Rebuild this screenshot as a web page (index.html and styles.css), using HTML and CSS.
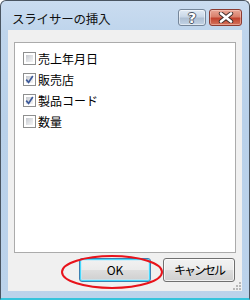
FILE: index.html
```html
<!DOCTYPE html>
<html lang="ja">
<head>
<meta charset="utf-8">
<link rel="stylesheet" href="styles.css">
</head>
<body>
<div class="window">
  <div class="titlebar">
    <span class="title">スライサーの挿入</span>
    <div class="caption-btns">
      <div class="cap help"><span class="q">?</span></div>
      <div class="cap close">
        <svg width="16" height="11" viewBox="0 0 16 11">
          <path d="M3 1.5 L13 9.5 M13 1.5 L3 9.5" stroke="#3a2a28" stroke-width="4.4" stroke-linecap="round" fill="none"/>
          <path d="M3 1.5 L13 9.5 M13 1.5 L3 9.5" stroke="#ffffff" stroke-width="2.6" stroke-linecap="round" fill="none"/>
        </svg>
      </div>
    </div>
  </div>
  <div class="client">
    <div class="listbox">
      <div class="item"><span class="chk"></span><span class="lbl">売上年月日</span></div>
      <div class="item"><span class="chk on"><svg width="9" height="9" viewBox="0 0 9 9"><path d="M1.2 4.6 L3.6 7.4 L7.8 1" stroke="#3d5a9a" stroke-width="1.7" fill="none"/></svg></span><span class="lbl">販売店</span></div>
      <div class="item"><span class="chk on"><svg width="9" height="9" viewBox="0 0 9 9"><path d="M1.2 4.6 L3.6 7.4 L7.8 1" stroke="#3d5a9a" stroke-width="1.7" fill="none"/></svg></span><span class="lbl">製品コード</span></div>
      <div class="item"><span class="chk"></span><span class="lbl">数量</span></div>
    </div>
    <div class="buttons">
      <div class="btn default">OK</div>
      <div class="btn"><span class="kana">キャンセル</span></div>
    </div>
    <svg class="grip" width="8" height="8" viewBox="0 0 8 8">
      <rect x="6" y="0" width="2" height="2" fill="#b8b8b8"/>
      <rect x="3" y="3" width="2" height="2" fill="#b8b8b8"/>
      <rect x="6" y="3" width="2" height="2" fill="#b8b8b8"/>
      <rect x="0" y="6" width="2" height="2" fill="#b8b8b8"/>
      <rect x="3" y="6" width="2" height="2" fill="#b8b8b8"/>
      <rect x="6" y="6" width="2" height="2" fill="#b8b8b8"/>
    </svg>
  </div>
  <svg class="annot" width="250" height="300" viewBox="0 0 250 300">
    <ellipse cx="112" cy="272" rx="50" ry="16" fill="none" stroke="#e8131b" stroke-width="2"/>
  </svg>
</div>
</body>
</html>
```

FILE: styles.css
```css
html, body {
  margin: 0;
  padding: 0;
  background: #ffffff;
}
body {
  width: 250px;
  height: 300px;
  overflow: hidden;
  font-family: "Noto Sans CJK JP", "Noto Sans", sans-serif;
}
.window {
  position: relative;
  box-sizing: border-box;
  width: 250px;
  height: 300px;
  border: 1px solid #4a5561;
  border-bottom: 2px solid #36c4dc;
  border-radius: 6px 6px 0 0;
  background: linear-gradient(to bottom, #cadcf0 0px, #bfd5ec 30px, #b9d1ea 120px, #bcd3eb 300px);
  padding: 0 7px 7px 7px;
  display: flex;
  flex-direction: column;
}
.titlebar {
  height: 29px;
  display: flex;
  align-items: flex-start;
  justify-content: space-between;
}
.title {
  font-size: 12.5px;
  line-height: 16px;
  margin-top: 10px;
  margin-left: 4px;
  color: #111;
  letter-spacing: -0.2px;
}
.caption-btns {
  display: flex;
  gap: 3px;
  margin-top: 8px;
}
.cap {
  box-sizing: border-box;
  height: 17px;
  border-radius: 3px;
  display: flex;
  align-items: center;
  justify-content: center;
}
.help {
  width: 28px;
  border: 1px solid #75869a;
  background: linear-gradient(to bottom, #e2ebf5 0%, #c9d7e7 45%, #aebfd3 55%, #c2d3e5 100%);
  box-shadow: inset 0 0 0 1px rgba(255,255,255,0.5);
}
.q {
  font-family: "DejaVu Sans", sans-serif;
  font-weight: bold;
  font-size: 14px;
  line-height: 14px;
  color: #ffffff;
  text-shadow: 1px 0 0 #4b5563, -1px 0 0 #4b5563, 0 1px 0 #4b5563, 0 -1px 0 #4b5563;
}
.close {
  width: 33px;
  border: 1px solid #8b3b32;
  background: linear-gradient(to bottom, #e9a797 0%, #d9806c 45%, #c2422e 55%, #d3735c 100%);
  box-shadow: inset 0 0 0 1px rgba(255,220,210,0.45);
}
.client {
  position: relative;
  flex: 1;
  background: #f0f0f0;
  padding: 12px 6px 8px 6px;
  display: flex;
  flex-direction: column;
}
.listbox {
  box-sizing: border-box;
  height: 211px;
  background: #ffffff;
  border: 1px solid #ababab;
  padding: 9px 0 0 8px;
  display: flex;
  flex-direction: column;
  gap: 8px;
}
.item {
  display: flex;
  align-items: center;
  height: 13px;
}
.chk {
  box-sizing: border-box;
  width: 13px;
  height: 13px;
  border: 1px solid #8e8f8f;
  background: #ffffff;
  display: flex;
  align-items: center;
  justify-content: center;
  position: relative;
}
.chk::before {
  content: "";
  position: absolute;
  left: 2px; top: 2px; right: 2px; bottom: 2px;
  background: linear-gradient(135deg, #c6c9ce 0%, #e3e5e8 60%, #f4f4f4 100%);
}
.chk svg {
  position: relative;
}
.lbl {
  margin-left: 2px;
  font-size: 12px;
  line-height: 14px;
  color: #000;
}
.buttons {
  display: flex;
  justify-content: flex-end;
  gap: 12px;
  margin-top: 5px;
  padding-right: 1px;
}
.btn {
  box-sizing: border-box;
  width: 72px;
  height: 24px;
  border: 1px solid #707070;
  border-radius: 3px;
  background: linear-gradient(to bottom, #f2f2f2 0%, #ebebeb 48%, #dddddd 52%, #cfcfcf 100%);
  box-shadow: inset 0 0 0 1px rgba(255,255,255,0.7);
  font-size: 12px;
  line-height: 22px;
  text-align: center;
  color: #000;
}
.kana {
  letter-spacing: -2px;
}
.btn.default {
  border-color: #3c7fb1;
  box-shadow: inset 0 0 0 1px #48d8fb, inset 0 0 0 2px rgba(190,235,252,0.6);
}
.grip {
  position: absolute;
  right: 1px;
  bottom: 1px;
}
.annot {
  position: absolute;
  left: -1px;
  top: -1px;
  pointer-events: none;
}
```
